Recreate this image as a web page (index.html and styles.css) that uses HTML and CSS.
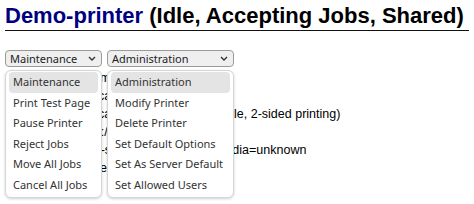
FILE: index.html
```html
<!DOCTYPE html>
<html lang="en">
<head>
    <meta charset="UTF-8">
    <title>Demo-printer - CUPS</title>
    <link rel="stylesheet" href="styles.css">
</head>
<body>
    <h1 class="title"><a href="#">Demo-printer</a> (Idle, Accepting Jobs, Shared)</h1>

    <div class="actions">
        <div class="select maint">
            <span>Maintenance</span>
            <svg class="chev" width="8" height="5" viewBox="0 0 8 5"><path d="M1 1l3 3 3-3" fill="none" stroke="#333" stroke-width="1.4"/></svg>
            <ul class="menu">
                <li class="active">Maintenance</li>
                <li>Print Test Page</li>
                <li>Pause Printer</li>
                <li>Reject Jobs</li>
                <li>Move All Jobs</li>
                <li>Cancel All Jobs</li>
            </ul>
        </div>
        <div class="select admin">
            <span>Administration</span>
            <svg class="chev" width="8" height="5" viewBox="0 0 8 5"><path d="M1 1l3 3 3-3" fill="none" stroke="#333" stroke-width="1.4"/></svg>
            <ul class="menu">
                <li class="active">Administration</li>
                <li>Modify Printer</li>
                <li>Delete Printer</li>
                <li>Set Default Options</li>
                <li>Set As Server Default</li>
                <li>Set Allowed Users</li>
            </ul>
        </div>
    </div>

    <table class="info">
        <tr><th>Description:</th><td>Demo</td></tr>
        <tr><th>Location:</th><td>Local office</td></tr>
        <tr><th>Driver:</th><td>Local Raw Printer (grayscale, 2-sided printing)</td></tr>
        <tr><th>Connection:</th><td>ipp://demo</td></tr>
        <tr><th>Defaults:</th><td>job-sheets=none, none media=unknown<br>sides=one-sided</td></tr>
    </table>
</body>
</html>
```

FILE: styles.css
```css
html, body {
    min-height: 204px;
}
body {
    margin: 0;
    padding: 0 5px;
    font-family: "Liberation Sans", Arial, sans-serif;
    background: #fff;
    color: #000;
}
.title {
    margin: 0;
    padding: 3px 0 2px;
    font-size: 22px;
    line-height: 25px;
    font-weight: bold;
    border-bottom: 1px solid #111;
}
.title a {
    color: #00007f;
    text-decoration: none;
}
.actions {
    display: flex;
    gap: 5px;
    margin-top: 19px;
    position: relative;
    z-index: 2;
}
.select {
    position: relative;
    display: flex;
    align-items: center;
    justify-content: space-between;
    box-sizing: border-box;
    height: 17px;
    padding: 0 5px 0 4px;
    border: 1px solid #9a9a9a;
    border-radius: 4px;
    background: #efefef;
    font-family: "Noto Sans", sans-serif;
    font-size: 11px;
    color: #222;
}
.maint { width: 97px; }
.admin { width: 127px; }
.menu {
    position: absolute;
    top: 19px;
    left: -1px;
    right: -1px;
    margin: 0;
    padding: 1px 3px 2px;
    list-style: none;
    background: #fff;
    border: 1px solid #d6d6d6;
    border-radius: 6px;
    box-shadow: 0 1px 3px rgba(0, 0, 0, 0.18);
}
.menu li {
    height: 20.5px;
    line-height: 20.5px;
    padding-left: 4px;
    border-radius: 4px;
    white-space: nowrap;
    color: #333;
}
.menu li.active {
    background: #e4e4e4;
}
.info {
    border-collapse: collapse;
    font-size: 12.5px;
    line-height: 18px;
    margin-top: 2px;
}
.info th {
    width: 75px;
    padding: 0 4px 0 0;
    text-align: right;
    vertical-align: top;
}
.info td {
    padding: 0;
}
```
